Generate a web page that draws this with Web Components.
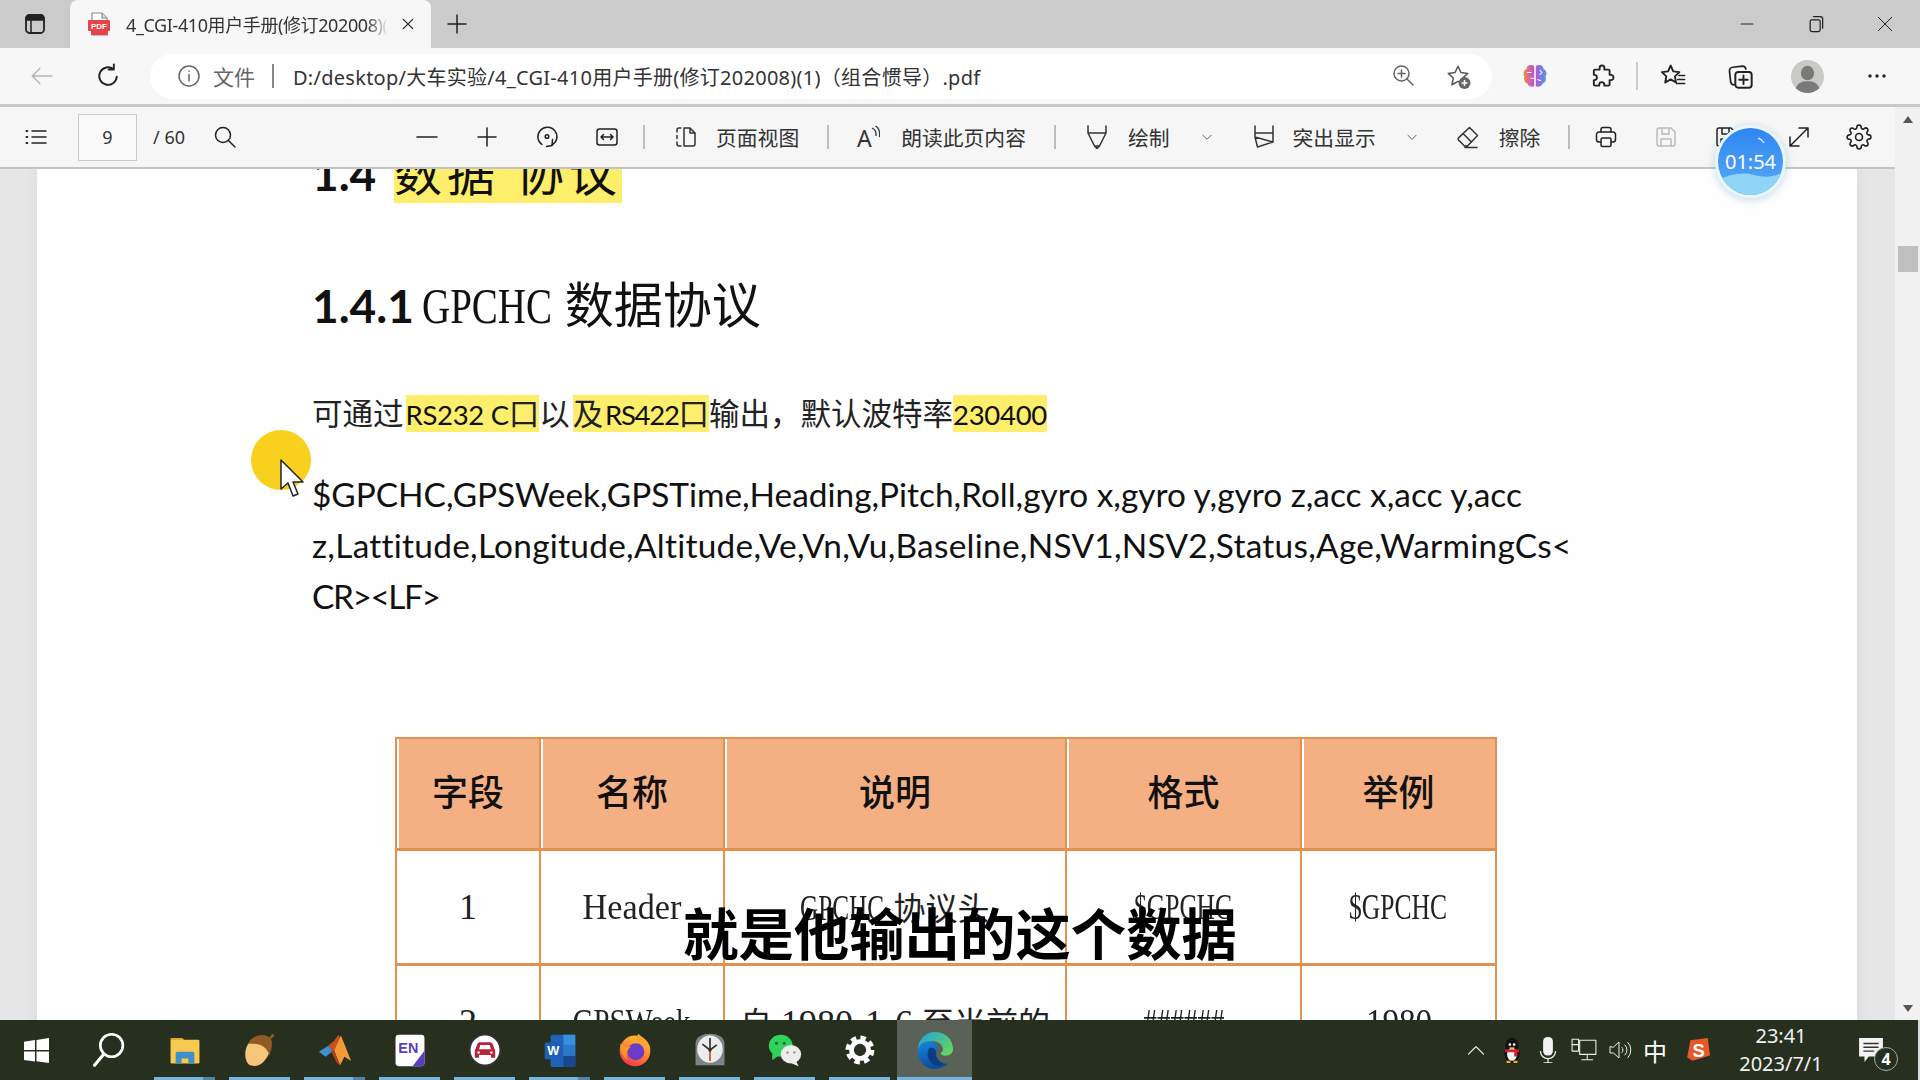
<!DOCTYPE html>
<html lang="zh">
<head>
<meta charset="utf-8">
<title>4_CGI-410用户手册</title>
<style>
  html, body { margin: 0; height: 100%; overflow: hidden; background: #fff; }
  body { font-family: "Noto Sans", "Noto Sans CJK SC", sans-serif; position: relative; text-autospace: no-autospace; }
</style>
</head>
<body>
<app-window>
  <tab-strip></tab-strip>
  <address-bar></address-bar>
  <pdf-viewer>
    <pdf-toolbar slot="toolbar"></pdf-toolbar>
    <doc-heading top><doc-num>1.4</doc-num> <hl-text>数据 协议</hl-text></doc-heading>
    <doc-heading><doc-num>1.4.1</doc-num> <doc-latin w="132" s="0.78" fs="50" style="margin-left:-3px">GPCHC</doc-latin> 数据协议</doc-heading>
    <doc-port>可通过<hl-text style="margin-left:2px"><doc-cal>RS232 C</doc-cal>口</hl-text>以<hl-text style="margin-left:3px">及<doc-cal style="margin-left:-4px;letter-spacing:-1.300px">RS422</doc-cal>口</hl-text>输出，默认波特率<hl-text><doc-cal>230400</doc-cal></hl-text></doc-port>
    <doc-fields>$GPCHC,GPSWeek,GPSTime,Heading,Pitch,Roll,gyro x,gyro y,gyro z,acc x,acc y,acc<br><span style="letter-spacing:.27px">z,Lattitude,Longitude,Altitude,Ve,Vn,Vu,Baseline,NSV1,NSV2,Status,Age,WarmingCs&lt;</span><br><span style="letter-spacing:-1.400px">CR&gt;&lt;LF&gt;</span></doc-fields>
    <doc-table></doc-table>
  </pdf-viewer>
  <task-bar></task-bar>
</app-window>
<timer-badge>01:54</timer-badge>
<cursor-spot></cursor-spot>
<sub-title>就是他输出的这个数据</sub-title>

<script>
// Icons, all on a 24 box unless the viewBox is given
const S = (body, extra = '') => `<svg viewBox="0 0 24 24" fill="none" stroke="currentColor" stroke-width="1.5" stroke-linecap="round" stroke-linejoin="round" ${extra}>${body}</svg>`;
const BOX = (vb, body) => `<svg viewBox="0 0 ${vb} ${vb}">${body}</svg>`;
const STAR = 'M12 3l2.7 5.8 6.3.8-4.6 4.3 1.2 6.2L12 17l-5.6 3.1 1.2-6.2L3 9.6l6.3-.8z';
const GEAR = 'M19.4 15a1.65 1.65 0 0 0 .33 1.82l.06.06a2 2 0 0 1 0 2.83 2 2 0 0 1-2.83 0l-.06-.06a1.65 1.65 0 0 0-1.82-.33 1.65 1.65 0 0 0-1 1.51V21a2 2 0 0 1-2 2 2 2 0 0 1-2-2v-.09A1.65 1.65 0 0 0 9 19.4a1.65 1.65 0 0 0-1.82.33l-.06.06a2 2 0 0 1-2.83 0 2 2 0 0 1 0-2.83l.06-.06a1.65 1.65 0 0 0 .33-1.82 1.65 1.65 0 0 0-1.51-1H3a2 2 0 0 1-2-2 2 2 0 0 1 2-2h.09A1.65 1.65 0 0 0 4.6 9a1.65 1.65 0 0 0-.33-1.82l-.06-.06a2 2 0 0 1 0-2.83 2 2 0 0 1 2.83 0l.06.06a1.65 1.65 0 0 0 1.82.33H9a1.65 1.65 0 0 0 1-1.51V3a2 2 0 0 1 2-2 2 2 0 0 1 2 2v.09a1.65 1.65 0 0 0 1 1.51 1.65 1.65 0 0 0 1.82-.33l.06-.06a2 2 0 0 1 2.83 0 2 2 0 0 1 0 2.83l-.06.06a1.65 1.65 0 0 0-.33 1.82V9a1.65 1.65 0 0 0 1.51 1H21a2 2 0 0 1 2 2 2 2 0 0 1-2 2h-.09a1.65 1.65 0 0 0-1.51 1z';

const ICONS = {
    window: S('<rect x="3" y="3" width="18" height="18" rx="3.5" stroke-width="1.8"/><path d="M3 8V6.5A3.5 3.5 0 0 1 6.500 3h11A3.500 3.500 0 0 1 21 6.500V8z" fill="currentColor"/><path d="M8 8v13"/>'),
    pdf: BOX(24, '<path d="M5 1h10l5 5v17H5z" fill="#fff" stroke="#8a8a8a" stroke-width="1.2"/><path d="M15 1v5h5" fill="#ddd" stroke="#8a8a8a" stroke-width="1.2"/><rect x="1" y="8" width="22" height="11" rx="1" fill="#e8424a"/><text x="12" y="16.500" font-size="8" font-weight="700" fill="#fff" text-anchor="middle" font-family="Liberation Sans">PDF</text><rect x="4" y="19" width="17" height="4" fill="#e8424a"/>'),
    close: S('<path d="M5 5l14 14M19 5L5 19" stroke-width="1.8"/>'),
    plus: S('<path d="M12 3v18M3 12h18"/>'),
    min: S('<path d="M5 12h14" stroke-width="1.300"/>'),
    restore: S('<rect x="5" y="7" width="12" height="14" rx="2"/><path d="M9 3h8a3 3 0 0 1 3 3v11"/>', 'stroke-width="1.200"'),
    winclose: S('<path d="M4 4l16 16M20 4L4 20" stroke-width="1.200"/>'),
    back: S('<path d="M21 12H3M10 5l-7 7 7 7" stroke-width="1.400"/>'),
    reload: S('<path d="M19.500 12.500a7.500 7.500 0 1 1-2.800-6.300M17 2v4.500h-4.500" stroke-width="1.600"/>'),
    info: S('<circle cx="12" cy="12" r="10"/><path d="M12 10.500V17M12 7v.3"/>'),
    zoomin: S('<circle cx="10.500" cy="10.500" r="7.500"/><path d="M10.500 7v7M7 10.500h7M16 16l6 6"/>'),
    staradd: BOX(24, `<path d="${STAR}" fill="none" stroke="#555" stroke-width="1.400" stroke-linejoin="round"/><circle cx="18" cy="18.500" r="5.500" fill="#666"/><path d="M18 15.800v5.400M15.300 18.500h5.400" stroke="#fff" stroke-width="1.400"/>`),
    brain: BOX(24, '<defs><linearGradient id="b" x1="0" x2="1"><stop offset="0" stop-color="#f28a3c"/><stop offset=".45" stop-color="#c04fd8"/><stop offset="1" stop-color="#4f9be8"/></linearGradient></defs><path d="M11.300 3.500C8 1.500 5 3 4.600 6 2 7 1.500 10.500 3 12.500 1.800 15 3.500 18 5.500 18.500 6 21 9.500 22 11.300 20.500zM12.700 3.500C16 1.500 19 3 19.400 6 22 7 22.500 10.500 21 12.500 22.200 15 20.500 18 18.500 18.500 18 21 14.500 22 12.700 20.500z" fill="url(#b)"/><path d="M5 9h4M8 14h3.300M16 7l2 2-2 2M14 15l3 1" stroke="#fff" stroke-width=".9" fill="none"/>'),
    puzzle: S('<path d="M10 5a2 2 0 0 1 4 0v1.500h3.500a1 1 0 0 1 1 1V11H20a2.300 2.300 0 0 1 0 4.500h-1.500v3.800a1 1 0 0 1-1 1H14v-.8a2.200 2.200 0 0 0-4.400 0v.8H6a1 1 0 0 1-1-1v-3.800h.8a2.300 2.300 0 0 0 0-4.500H5V7.500a1 1 0 0 1 1-1h4z" stroke-width="1.600"/>'),
    favs: S(`<path d="M10 3l2.200 5 5.300.7-3.900 3.600 1 5.300-4.600-2.700-4.700 2.700 1-5.300L2.500 8.700 7.800 8z" stroke-width="1.600"/><path d="M17 11.500h5M16 15h6M15 18.500h7" stroke-width="1.300"/>`),
    collections: S('<path d="M7 19.500A3 3 0 0 1 4 17L3 8a3 3 0 0 1 2.800-3.500L14 3.500a3 3 0 0 1 3 2.500" stroke-width="1.500"/><rect x="8" y="8.500" width="14" height="13.500" rx="2.500" stroke-width="1.700"/><path d="M15 11.500v7.500M11.300 15.200h7.400" stroke-width="1.600"/>'),
    avatar: BOX(24, '<circle cx="12" cy="12" r="12" fill="#c9c9c7"/><ellipse cx="12" cy="9.500" rx="4.800" ry="5.300" fill="#7a7a78"/><path d="M3.500 20.500C5 16.500 8 15.500 12 15.500s7 1 8.500 5A12 12 0 0 1 3.500 20.500z" fill="#7a7a78"/>'),
    dots: BOX(24, '<circle cx="5" cy="12" r="1.700" fill="#222"/><circle cx="12" cy="12" r="1.700" fill="#222"/><circle cx="19" cy="12" r="1.700" fill="#222"/>'),
    list: S('<path d="M8 6h14M8 12h14M8 18h14"/><path d="M2.500 6h.8M2.500 12h.8M2.500 18h.8" stroke-width="2"/>'),
    search: S('<circle cx="10" cy="10" r="7.500"/><path d="M15.500 15.500l6.500 6.500"/>'),
    minus: S('<path d="M2 12h20" stroke-width="1.500"/>'),
    rotate: S('<path d="M7 19.500A9.500 9.500 0 1 1 17 20"/><circle cx="12" cy="11.500" r="1.800"/><path d="M17.500 14.500l-.5 6 -5.500 1"/>'),
    fit: S('<rect x="2" y="4" width="20" height="16" rx="2.500"/><path d="M6 12h12M8.500 9.500L6 12l2.500 2.500M15.500 9.500L18 12l-2.500 2.500"/>'),
    pageview: S('<path d="M7 3H5a2 2 0 0 0-2 2v2M3 10.500v3M3 17v2a2 2 0 0 0 2 2h2"/><path d="M10 3h6l5 5v11a2 2 0 0 1-2 2h-9zM16 3v5h5"/>'),
    read: BOX(24, '<text x="1" y="22" font-size="23" fill="#333" font-family="Noto Sans">A</text><path d="M16 3c3 1.500 4.500 4.500 4 8M19.500 1c4 2 4.500 6 4 11" fill="none" stroke="#333" stroke-width="1.300"/>'),
    draw: S('<path d="M3 1v7l6.500 13h5L21 8V1M3 8h18M9.500 21l2.500 2.500 2.500-2.500"/>'),
    chevron: S('<path d="M5 9l7 7 7-7" stroke-width="1.600"/>'),
    highlight: S('<path d="M3 1v7h18V1M3 8v4l18 5V8M3 12l2.500 10L21 17"/>'),
    eraser: S('<path d="M13.500 2.500l8 8-10 10.500h-3l-6-6a1.500 1.500 0 0 1 0-2.100zM7 8.500l8.500 8.500M9 22.500h12"/>'),
    print: S('<path d="M7 7V4.500A2 2 0 0 1 9 2.500h6a2 2 0 0 1 2 2V7"/><path d="M7 17H5a2.500 2.500 0 0 1-2.500-2.500v-5A2.500 2.500 0 0 1 5 7h14a2.500 2.500 0 0 1 2.500 2.500v5A2.500 2.500 0 0 1 19 17h-2"/><rect x="7" y="13" width="10" height="8.500" rx="1.500"/>', 'stroke-width="1.800"'),
    save: S('<path d="M5 3h12l4 4v12a2 2 0 0 1-2 2H5a2 2 0 0 1-2-2V5a2 2 0 0 1 2-2zM8 3v6h7V3M7 21v-7h10v7"/>'),
    expand: S('<path d="M3 21L21 3M12 3h9v9M3 12v9h9"/>'),
    gear: S(`<circle cx="12" cy="12" r="3.200"/><path d="${GEAR}"/>`),
    // Taskbar
    win: BOX(24, '<path d="M0 3.500L10.500 2v9.500H0zM12 1.800L24 0v11.500H12zM0 13h10.500v9.500L0 21zM12 13h12v11l-12-1.700z" fill="#fff"/>'),
    tsearch: BOX(40, '<circle cx="24" cy="15" r="12.500" fill="none" stroke="#fff" stroke-width="3"/><path d="M15 25L5 37" stroke="#fff" stroke-width="3.500" stroke-linecap="round"/>'),
    explorer: BOX(40, '<path d="M3 6h14l3 3h-17z" fill="#dba429"/><rect x="3" y="8" width="34" height="28" rx="1.500" fill="#f5ca4f"/><path d="M9 36V24a2 2 0 0 1 2-2h18a2 2 0 0 1 2 2v12h-7v-6h-8v6z" fill="#3f8fca"/>'),
    acorn: BOX(40, '<path d="M8 10C1 18 1 32 7 37c5 3 12 2 17-3 6-6 9-14 8-21z" fill="#f6c679"/><path d="M6 13C10 2 27-1 33 7c2 5 1 12-2 19-3-9-10-15-25-13z" fill="#8f5a24"/><path d="M32 6l4-4" stroke="#8f5a24" stroke-width="3"/>'),
    matlab: BOX(40, '<path d="M1 22l11-7 6 6-9 7z" fill="#3f8fd0"/><path d="M12 15l7-6 5-7 3 6-8 14z" fill="#c94f1f"/><path d="M27 3l12 30-8-5-5 10-7-17z" fill="#f29a3a"/><path d="M15 21l4 0 7 17-4-3z" fill="#b83d17"/>'),
    en: BOX(40, '<rect x="3" y="2" width="34" height="37" rx="4" fill="#fff"/><path d="M37 21v14a4 4 0 0 1-4 4H23z" fill="#5b3dbd"/><text x="18" y="24" font-size="17" font-weight="700" fill="#5b3dbd" text-anchor="middle" font-family="Liberation Sans">EN</text>'),
    car: BOX(40, '<circle cx="20" cy="20" r="18" fill="#fff" stroke="#333" stroke-width="2"/><path d="M8 21l3-8a3 3 0 0 1 3-2h12a3 3 0 0 1 3 2l3 8v8h-5v-3H13v3H8z" fill="#b9233a"/><path d="M13 19l1.500-5h11L27 19z" fill="#fff"/><circle cx="12.500" cy="23" r="1.500" fill="#fff"/><circle cx="27.500" cy="23" r="1.500" fill="#fff"/>'),
    word: BOX(40, '<rect x="9" y="2" width="29" height="38" rx="2" fill="#1f62b8"/><rect x="24" y="2" width="14" height="12" fill="#3a8fdc"/><rect x="24" y="14" width="14" height="13" fill="#2a78cc"/><rect x="24" y="27" width="14" height="13" fill="#17498f"/><rect x="2" y="11" width="20" height="20" rx="2" fill="#1d5fb4"/><text x="12" y="26" font-size="15" font-weight="700" fill="#fff" text-anchor="middle" font-family="Liberation Sans">W</text>'),
    firefox: BOX(40, '<defs><linearGradient id="f" x1=".7" y1="0" x2=".2" y2="1"><stop offset="0" stop-color="#ffc23a"/><stop offset=".55" stop-color="#ff7a2a"/><stop offset="1" stop-color="#f02a5a"/></linearGradient></defs><circle cx="20" cy="21" r="18" fill="url(#f)"/><circle cx="21" cy="22" r="10" fill="#6a3cc8"/><path d="M24 1c4 5 12 7 14 18-5-6-11-8-16-7 0-4 0-8 2-11z" fill="#ffa62e"/><path d="M3 12c3 5 8 5 12 4-4 4-7 9-4 16-5-4-9-12-8-20z" fill="#ff9a2a"/>'),
    clock: BOX(40, '<path d="M3 12C3 5 11 1 20 1s17 4 17 11v26H3z" fill="#7d8488"/><ellipse cx="20" cy="19" rx="15" ry="16" fill="#ececec"/><path d="M20 20V33" stroke="#c4502a" stroke-width="2"/><path d="M20 20L11 13M20 20l8-6M20 6v14" stroke="#333" stroke-width="2"/><circle cx="20" cy="20" r="2" fill="#333"/>'),
    wechat: BOX(40, '<ellipse cx="15" cy="15" rx="14" ry="13" fill="#2fd25c"/><path d="M5 24l0 8 7-5z" fill="#2fd25c"/><circle cx="10" cy="12" r="1.800" fill="#1b6b33"/><circle cx="19" cy="12" r="1.800" fill="#1b6b33"/><ellipse cx="27" cy="25" rx="12" ry="11" fill="#ececec"/><path d="M33 33l3 6-8-3z" fill="#ececec"/><circle cx="23" cy="23" r="1.500" fill="#999"/><circle cx="31" cy="23" r="1.500" fill="#999"/>'),
    tgear: BOX(40, '<circle cx="20" cy="20" r="10" fill="none" stroke="#fff" stroke-width="5.500"/><circle cx="20" cy="20" r="14.500" fill="none" stroke="#fff" stroke-width="5" stroke-dasharray="6.400 5"/>'),
    edge: BOX(40, '<defs><linearGradient id="e1" x1="0" y1="0" x2="1" y2=".6"><stop offset="0" stop-color="#1f9ee0"/><stop offset="1" stop-color="#5fd36a"/></linearGradient><linearGradient id="e2" x1="0" y1="0" x2=".3" y2="1"><stop offset="0" stop-color="#1a86dc"/><stop offset="1" stop-color="#0e4c9c"/></linearGradient></defs><path d="M2 20C2 9 10 1 20 1c11 0 19 8 19 18 0 4-3 7-8 7-3 0-5-1-5-3 2-1 3-3 2-6-2-5-9-8-16-5C7 14 3 16 2 20z" fill="url(#e1)"/><path d="M2 20C3 14 9 10 15 11c7 1 9 6 7 10-2 3 0 9 5 12 2 1 5 2 7 1-4 4-9 6-14 6C9 40 1 31 2 20z" fill="url(#e2)"/><path d="M14 18c4-1 7 1 7 4-1 5 3 11 9 13-3 2-7 2-10 1-7-3-10-12-6-18z" fill="#0a3d80"/>'),
    // Tray
    tchevron: S('<path d="M3 17l9-9 9 9" stroke-width="1.500"/>'),
    qq: BOX(24, '<ellipse cx="12" cy="8" rx="6" ry="7" fill="#111"/><ellipse cx="12" cy="15.500" rx="7" ry="8" fill="#111"/><ellipse cx="12" cy="16" rx="4.500" ry="6" fill="#f4f4f4"/><circle cx="10" cy="7" r="1.200" fill="#fff"/><circle cx="14" cy="7" r="1.200" fill="#fff"/><path d="M9.500 9.500h5l-2.500 2z" fill="#f2b01e"/><path d="M5.500 11.500h13v2.500h-13z" fill="#d81e2c"/><path d="M14 14h3v4h-3z" fill="#d81e2c"/><path d="M7 23h3.500M13.500 23H17" stroke="#f2b01e" stroke-width="2"/>'),
    mic: BOX(24, '<rect x="7.500" y="0" width="9" height="17" rx="4" fill="#f2f2f2"/><path d="M5 13a7 7 0 0 0 14 0M12 20v4M8 24h8" fill="none" stroke="#f2f2f2" stroke-width="1.200"/>'),
    network: S('<rect x="8" y="3" width="15" height="13" stroke-width="1"/><rect x="1" y="2" width="6" height="11" fill="#27301f" stroke-width="1"/><path d="M1 7h6M15 16v5M10 21h10" stroke-width="1"/>'),
    volume: S('<path d="M2 9v6h3.500L11 20V4L5.500 9zM14 9.500a3.500 3.500 0 0 1 0 5M17 7a7 7 0 0 1 0 10M20 4.500a11 11 0 0 1 0 15" stroke-width="1"/>'),
    sogou: BOX(24, '<path d="M5 3l16-2 2 16-16 5-5-3z" fill="#e8592a"/><text x="12.500" y="18" font-size="17" font-weight="700" fill="#fff" text-anchor="middle" font-family="Liberation Sans">S</text>'),
    notice: BOX(24, '<path d="M1 1h22v17H10l-4 5v-5H1z" fill="#f4f4f4"/><path d="M5 6h14M5 9.500h14M5 13h10" stroke="#333" stroke-width="1.300"/>')
};

class UiIcon extends HTMLElement {
    connectedCallback() {
        const size = this.getAttribute('size') || 24;
        const color = this.getAttribute('color') || '#222';
        this.attachShadow({ mode: 'open' }).innerHTML = `
            <style>
                :host { display: inline-flex; flex: none; width: ${size}px; height: ${size}px; color: ${color}; }
                svg { width: 100%; height: 100%; display: block; }
            </style>${ICONS[this.getAttribute('name')]}`;
    }
}
customElements.define('ui-icon', UiIcon);

class AppWindow extends HTMLElement {
    constructor() {
        super();
        this.attachShadow({ mode: 'open' }).innerHTML = `
            <style>
                :host { display: flex; flex-direction: column; width: 1920px; height: 1080px; overflow: hidden; }
            </style><slot></slot>`;
    }
}
customElements.define('app-window', AppWindow);

class TabStrip extends HTMLElement {
    constructor() {
        super();
        this.attachShadow({ mode: 'open' }).innerHTML = `
            <style>
                :host { display: flex; align-items: stretch; height: 48px; flex: none; background: #cbcbcb; color: #222; }
                .side { width: 70px; display: flex; align-items: center; justify-content: center; }
                .tab { width: 361px; background: #f7f7f7; border-radius: 8px 8px 0 0; display: flex; align-items: center; padding-left: 17px; box-sizing: border-box; }
                .title { width: 262px; margin-left: 15px; font-size: 18px; letter-spacing: -.4px; white-space: nowrap; overflow: hidden; color: #333;
                    -webkit-mask-image: linear-gradient(90deg, #000 92%, transparent); }
                .x { margin-left: 12px; }
                .new { width: 52px; display: flex; align-items: center; justify-content: center; }
                .ctl { margin-left: auto; display: flex; padding-right: 1px; }
                .ctl span { width: 69px; display: flex; align-items: center; justify-content: center; }
            </style>
            <div class="side"><ui-icon name="window" size="24"></ui-icon></div>
            <div class="tab">
                <ui-icon name="pdf" size="24"></ui-icon>
                <div class="title">4_CGI-410用户手册(修订202008)(1)（组合惯导）.pdf</div>
                <ui-icon class="x" name="close" size="16"></ui-icon>
            </div>
            <div class="new"><ui-icon name="plus" size="24"></ui-icon></div>
            <div class="ctl">
                <span><ui-icon name="min" size="20"></ui-icon></span>
                <span><ui-icon name="restore" size="20"></ui-icon></span>
                <span><ui-icon name="winclose" size="20"></ui-icon></span>
            </div>`;
    }
}
customElements.define('tab-strip', TabStrip);

class AddressBar extends HTMLElement {
    constructor() {
        super();
        this.attachShadow({ mode: 'open' }).innerHTML = `
            <style>
                :host { display: flex; align-items: center; height: 59px; flex: none; box-sizing: border-box; background: #f7f7f7; border-bottom: 3px solid #c8c8c8; }
                .btn { width: 60px; display: flex; justify-content: center; }
                .back { margin-left: 12px; }
                .reload { margin-left: 6px; }
                .pill { width: 1342px; height: 45px; margin-left: 12px; background: #fff; border-radius: 23px; display: flex; align-items: center; box-sizing: border-box; padding-left: 27px; padding-right: 21px; }
                .scheme { margin-left: 12px; font-size: 21px; color: #666; }
                .bar { width: 2px; height: 24px; background: #888; margin: 0 19px 0 17px; }
                .url { font-size: 20px; letter-spacing: .27px; color: #333; white-space: nowrap; }
                .right { margin-left: auto; display: flex; gap: 30px; }
                .tool { width: 54px; display: flex; justify-content: center; }
                .gap1 { margin-left: 16px; }
                .gap2 { margin-left: 13px; }
                .gap3 { margin-left: 16px; }
                .sep { width: 2px; height: 28px; background: #ccc; margin: 0 8px 0 7px; }
            </style>
            <div class="btn back"><ui-icon name="back" size="26" color="#b5b5b5"></ui-icon></div>
            <div class="btn reload"><ui-icon name="reload" size="28"></ui-icon></div>
            <div class="pill">
                <ui-icon name="info" size="24" color="#666"></ui-icon>
                <span class="scheme">文件</span>
                <span class="bar"></span>
                <span class="url">D:/desktop/大车实验/4_CGI-410用户手册(修订202008)(1)（组合惯导）.pdf</span>
                <div class="right">
                    <ui-icon name="zoomin" size="24" color="#666"></ui-icon>
                    <ui-icon name="staradd" size="26"></ui-icon>
                </div>
            </div>
            <div class="tool gap1"><ui-icon name="brain" size="28"></ui-icon></div>
            <div class="tool gap2"><ui-icon name="puzzle" size="28"></ui-icon></div>
            <span class="sep"></span>
            <div class="tool"><ui-icon name="favs" size="28"></ui-icon></div>
            <div class="tool gap2"><ui-icon name="collections" size="28"></ui-icon></div>
            <div class="tool gap2"><ui-icon name="avatar" size="33"></ui-icon></div>
            <div class="tool gap3"><ui-icon name="dots" size="24"></ui-icon></div>`;
    }
}
customElements.define('address-bar', AddressBar);

class PdfToolbar extends HTMLElement {
    constructor() {
        super();
        const btn = (name, size, color) => `<span class="b"><ui-icon name="${name}" size="${size || 24}" ${color ? `color="${color}"` : ''}></ui-icon></span>`;
        const item = (name, text, ml, gap) => `<span class="it" style="margin-left:${ml}px;gap:${gap}px"><ui-icon name="${name}" size="24" color="#333"></ui-icon><span class="t">${text}</span></span>`;
        const chev = (ml) => `<ui-icon name="chevron" size="14" color="#555" style="margin-left:${ml}px"></ui-icon>`;
        this.attachShadow({ mode: 'open' }).innerHTML = `
            <style>
                :host { display: flex; align-items: center; height: 62px; flex: none; box-sizing: border-box; background: #f6f6f6; border-bottom: 2px solid #c4c4c4; color: #333; }
                .list { width: 72px; display: flex; justify-content: center; }
                .page { width: 59px; height: 47px; margin-left: 6px; box-sizing: border-box; border: 1px solid #c9c9c9; background: #f9f9f9; display: flex; align-items: center; justify-content: center; font-size: 18px; }
                .of { margin-left: 16px; font-size: 18px; width: 47px; white-space: nowrap; }
                .find { width: 50px; display: flex; justify-content: center; }
                .b { width: 60px; display: flex; justify-content: center; flex: none; }
                .it { display: inline-flex; align-items: center; flex: none; }
                .t { font-size: 20.800px; white-space: nowrap; }
                .sep { width: 2px; height: 24px; background: #bdbdbd; flex: none; }
            </style>
            <div class="list"><ui-icon name="list" size="24"></ui-icon></div>
            <div class="page">9</div>
            <div class="of">/ 60</div>
            <div class="find"><ui-icon name="search" size="24"></ui-icon></div>
            <span style="width:147px;flex:none"></span>
            ${btn('minus')}${btn('plus')}${btn('rotate')}${btn('fit')}
            <span class="sep" style="margin-left:6px"></span>
            ${item('pageview', '页面视图', 29, 18)}
            <span class="sep" style="margin-left:28px"></span>
            ${item('read', '朗读此页内容', 27, 21)}
            <span class="sep" style="margin-left:28px"></span>
            ${item('draw', '绘制', 29, 19)}
            ${chev(30)}
            ${item('highlight', '突出显示', 38, 17)}
            ${chev(29)}
            ${item('eraser', '擦除', 37, 19)}
            <span class="sep" style="margin-left:28px"></span>
            <span style="width:6px;flex:none"></span>
            ${btn('print')}${btn('save', 24, '#bbb')}${btn('save')}
            <span style="width:13px;flex:none"></span>
            ${btn('expand')}${btn('gear', 26)}`;
    }
}
customElements.define('pdf-toolbar', PdfToolbar);

class PdfViewer extends HTMLElement {
    constructor() {
        super();
        this.attachShadow({ mode: 'open' }).innerHTML = `
            <style>
                :host { display: flex; flex: none; height: 913px; overflow: hidden; }
                .main { width: 1895px; display: flex; flex-direction: column; flex: none; }
                .scroll-area { flex: 1; background: #e6e6e6; overflow: hidden; display: flex; }
                .page { width: 1820px; margin-left: 37px; background: #fefefe; box-sizing: border-box; padding-left: 275px; height: 1200px; box-shadow: 0 0 14px rgba(0,0,0,.06); }
                .bar { width: 25px; background: #f1f1f1; display: flex; flex-direction: column; align-items: center; box-sizing: border-box; }
                .up { margin-top: 9px; width: 0; height: 0; border: 5.500px solid transparent; border-bottom: 7px solid #555; border-top: 0; }
                .thumb { width: 20px; height: 26px; background: #c0c0c0; margin-top: 123px; }
                .down { margin-top: auto; margin-bottom: 8px; width: 0; height: 0; border: 5.500px solid transparent; border-top: 7px solid #555; border-bottom: 0; }
            </style>
            <div class="main">
                <slot name="toolbar"></slot>
                <div class="scroll-area"><div class="page"><slot></slot></div></div>
            </div>
            <div class="bar"><span class="up"></span><span class="thumb"></span><span class="down"></span></div>`;
    }
}
customElements.define('pdf-viewer', PdfViewer);

class DocHeading extends HTMLElement {
    constructor() {
        super();
        this.attachShadow({ mode: 'open' }).innerHTML = `
            <style>
                :host { display: block; height: 60px; line-height: 60px; margin-top: 75px; font-size: 49px; color: #111; font-family: "Noto Sans CJK SC", sans-serif; white-space: nowrap; }
                :host([top]) { height: 54px; line-height: 54px; margin-top: -26px; font-size: 48px; --hl-space: 5px; --hl-ml: 7px; --hl-pb: 9px; }
            </style><slot></slot>`;
    }
}
customElements.define('doc-heading', DocHeading);

class DocNum extends HTMLElement {
    constructor() {
        super();
        this.attachShadow({ mode: 'open' }).innerHTML = `
            <style>:host { font-family: Lato, sans-serif; font-weight: 700; font-size: 46px; color: #111; }</style><slot></slot>`;
    }
}
customElements.define('doc-num', DocNum);

// Narrow serif that stands in for the half width latin of the source PDF font
class DocLatin extends HTMLElement {
    constructor() {
        super();
        const w = this.getAttribute('w');
        const s = this.getAttribute('s') || 1;
        const fs = this.getAttribute('fs');
        this.attachShadow({ mode: 'open' }).innerHTML = `
            <style>
                :host { display: inline-block; ${w ? `width: ${w}px;` : ''} ${fs ? `font-size: ${fs}px;` : ''} font-family: "Liberation Serif", serif; white-space: nowrap; }
                span { display: inline-block; transform: scaleX(${s}); transform-origin: ${w ? 'left' : 'center'}; }
            </style><span><slot></slot></span>`;
    }
}
customElements.define('doc-latin', DocLatin);

class DocCal extends HTMLElement {
    constructor() {
        super();
        this.attachShadow({ mode: 'open' }).innerHTML = `
            <style>:host { font-family: Lato, sans-serif; font-size: 27.500px; letter-spacing: -.3px; color: #111; }</style><slot></slot>`;
    }
}
customElements.define('doc-cal', DocCal);

class HlText extends HTMLElement {
    constructor() {
        super();
        this.attachShadow({ mode: 'open' }).innerHTML = `
            <style>:host { display: inline-block; line-height: var(--hl-lh, 48px); background: #fdee6c; letter-spacing: var(--hl-space, 0); margin-left: var(--hl-ml, 0); padding-bottom: var(--hl-pb, 0); }</style><slot></slot>`;
    }
}
customElements.define('hl-text', HlText);

class DocPort extends HTMLElement {
    constructor() {
        super();
        this.attachShadow({ mode: 'open' }).innerHTML = `
            <style>:host { display: block; height: 40px; line-height: 40px; margin-top: 60px; font-size: 30.500px; color: #222; font-family: "Noto Sans CJK SC", sans-serif; white-space: nowrap; --hl-lh: 34px; }</style><slot></slot>`;
    }
}
customElements.define('doc-port', DocPort);

class DocFields extends HTMLElement {
    constructor() {
        super();
        this.attachShadow({ mode: 'open' }).innerHTML = `
            <style>:host { display: block; line-height: 51px; margin-top: 37px; font-size: 33.400px; color: #111; font-family: Lato, sans-serif; white-space: nowrap; }</style><slot></slot>`;
    }
}
customElements.define('doc-fields', DocFields);

class DocTable extends HTMLElement {
    constructor() {
        super();
        this.attachShadow({ mode: 'open' }).innerHTML = `
            <style>
                :host { display: block; margin: 115px 0 0 83px; width: 1100px; }
                table { border-collapse: collapse; table-layout: fixed; width: 1100px; font-family: "Liberation Serif", "Noto Sans CJK SC", serif; color: #222; }
                th, td { border: 2px solid #e2914e; text-align: center; padding: 0; }
                th { background: #f4b083; height: 111px; box-sizing: border-box; padding-bottom: 6px; font: 500 36px/50px "Noto Sans CJK SC", sans-serif; color: #111; border-bottom-width: 3px; box-shadow: inset 2px 0 #fff; }
                td { height: 112px; font-size: 36px; line-height: 50px; }
                tr.one td { border-bottom-width: 3px; }
                .cjk { font-family: "Noto Sans CJK SC", sans-serif; font-size: 32px; }
                .gap { display: inline-block; width: 9px; }
            </style>
            <table>
                <colgroup><col style="width:144px"><col style="width:184px"><col style="width:342px"><col style="width:235px"><col style="width:195px"></colgroup>
                <tr><th>字段</th><th>名称</th><th>说明</th><th>格式</th><th>举例</th></tr>
                <tr class="one">
                    <td>1</td>
                    <td><doc-latin s="0.95">Header</doc-latin></td>
                    <td><doc-latin w="84" s="0.7">GPCHC</doc-latin><span class="gap"></span><span class="cjk">协议头</span></td>
                    <td><doc-latin s="0.71">$GPCHC</doc-latin></td>
                    <td><doc-latin s="0.71">$GPCHC</doc-latin></td>
                </tr>
                <tr>
                    <td>2</td>
                    <td><doc-latin s="0.8">GPSWeek</doc-latin></td>
                    <td><span class="cjk">自</span> 1980-1-6 <span class="cjk">至当前的</span></td>
                    <td><doc-latin s="0.75">######</doc-latin></td>
                    <td><doc-latin s="0.92">1980</doc-latin></td>
                </tr>
            </table>`;
    }
}
customElements.define('doc-table', DocTable);

class TaskBar extends HTMLElement {
    constructor() {
        super();
        const apps = [
            ['explorer', 1], ['acorn', 0], ['matlab', 1], ['en', 0], ['car', 0], ['word', 1],
            ['firefox', 0], ['clock', 0], ['wechat', 0], ['tgear', 0]
        ];
        this.attachShadow({ mode: 'open' }).innerHTML = `
            <style>
                :host { display: flex; align-items: stretch; height: 60px; flex: none; background: #27301f; color: #f2f2f2; position: relative; }
                .start { width: 72px; display: flex; align-items: center; justify-content: center; }
                .find { width: 75px; display: flex; align-items: center; justify-content: center; padding-right: 4px; box-sizing: border-box; }
                .app { width: 75px; display: flex; align-items: center; justify-content: center; position: relative; }
                .app::after { content: ""; position: absolute; left: 7px; right: 7px; bottom: 0; height: 3px; background: #76b4e0; }
                .app.stack::before { content: ""; position: absolute; right: 7px; width: 12px; bottom: 0; height: 3px; background: #4f86a8; z-index: 1; }
                .app.active { background: #5a6258; }
                .app.active::after { left: 0; right: 0; }
                .tray { margin-left: auto; display: flex; align-items: center; }
                .t { display: flex; justify-content: center; align-items: center; width: 36px; }
                .t.ime { font: 24px "Noto Sans CJK SC", sans-serif; color: #fff; width: 34px; }
                .clock { width: 96px; margin-left: 17px; text-align: center; font-size: 20px; line-height: 28px; color: #f2f2f2; }
                .note { position: relative; width: 42px; margin-left: 21px; margin-right: 28px; display: flex; justify-content: center; }
                .badge { position: absolute; right: -6px; top: 10px; width: 22px; height: 22px; border: 1px solid #aaa; border-radius: 50%; background: #27301f; font: 700 16px/22px "Noto Sans", sans-serif; text-align: center; color: #fff; }
                .edge { position: absolute; right: 0; top: 0; bottom: 0; width: 2px; background: #d8d8d8; }
            </style>
            <div class="start"><ui-icon name="win" size="25"></ui-icon></div>
            <div class="find"><ui-icon name="tsearch" size="36"></ui-icon></div>
            ${apps.map(([name, stack]) => `<div class="app${stack ? ' stack' : ''}"><ui-icon name="${name}" size="34"></ui-icon></div>`).join('')}
            <div class="app active"><ui-icon name="edge" size="38"></ui-icon></div>
            <div class="tray">
                <span class="t"><ui-icon name="tchevron" size="20" color="#eee"></ui-icon></span>
                <span class="t"><ui-icon name="qq" size="26"></ui-icon></span>
                <span class="t"><ui-icon name="mic" size="26"></ui-icon></span>
                <span class="t"><ui-icon name="network" size="26" color="#eee"></ui-icon></span>
                <span class="t"><ui-icon name="volume" size="24" color="#eee"></ui-icon></span>
                <span class="t ime">中</span>
                <span class="t" style="margin-left:8px"><ui-icon name="sogou" size="26"></ui-icon></span>
                <div class="clock">23:41<br>2023/7/1</div>
                <div class="note"><ui-icon name="notice" size="26"></ui-icon><span class="badge">4</span></div>
            </div>
            <span class="edge"></span>`;
    }
}
customElements.define('task-bar', TaskBar);

// Overlays that lie over the page
class TimerBadge extends HTMLElement {
    constructor() {
        super();
        this.attachShadow({ mode: 'open' }).innerHTML = `
            <style>
                :host { position: absolute; left: 1715px; top: 125px; width: 71px; height: 73px; box-sizing: border-box; border: 3px solid #e9f6fb; border-radius: 50%; overflow: hidden; display: flex; align-items: center; justify-content: center; background: linear-gradient(180deg, #2f86f3, #58aaf5); color: #fff; font-size: 20px; box-shadow: 0 2px 8px rgba(80,150,200,.35); }
                svg { position: absolute; left: 0; top: 0; width: 100%; height: 100%; }
                .t { position: relative; }
            </style>
            <svg viewBox="0 0 65 67" preserveAspectRatio="none"><path d="M0 52C12 46 24 44 36 47s20 2 29-3v23H0z" fill="#8fd3f5"/><path d="M40 10c3 1 5 3 6 5" fill="none" stroke="#d6ecfd" stroke-width="1.500"/></svg>
            <span class="t"><slot></slot></span>`;
    }
}
customElements.define('timer-badge', TimerBadge);

class CursorSpot extends HTMLElement {
    constructor() {
        super();
        this.attachShadow({ mode: 'open' }).innerHTML = `
            <style>
                :host { position: absolute; left: 251px; top: 430px; width: 60px; height: 60px; border-radius: 50%; background: #f8d01e; }
                svg { position: absolute; left: 29px; top: 29px; width: 26px; height: 40px; overflow: visible; }
            </style>
            <svg viewBox="0 0 26 40"><path d="M1 1v29l7-6 5 13 5-2-5-12h10z" fill="#fff" stroke="#222" stroke-width="1.500" stroke-linejoin="round"/></svg>`;
    }
}
customElements.define('cursor-spot', CursorSpot);

class SubTitle extends HTMLElement {
    constructor() {
        super();
        this.attachShadow({ mode: 'open' }).innerHTML = `
            <style>
                :host { position: absolute; left: 0; width: 1920px; top: 891px; text-align: center; font: 700 55.400px/80px "Noto Sans CJK SC", sans-serif; color: #000; }
            </style><slot></slot>`;
    }
}
customElements.define('sub-title', SubTitle);
</script>
</body>
</html>
